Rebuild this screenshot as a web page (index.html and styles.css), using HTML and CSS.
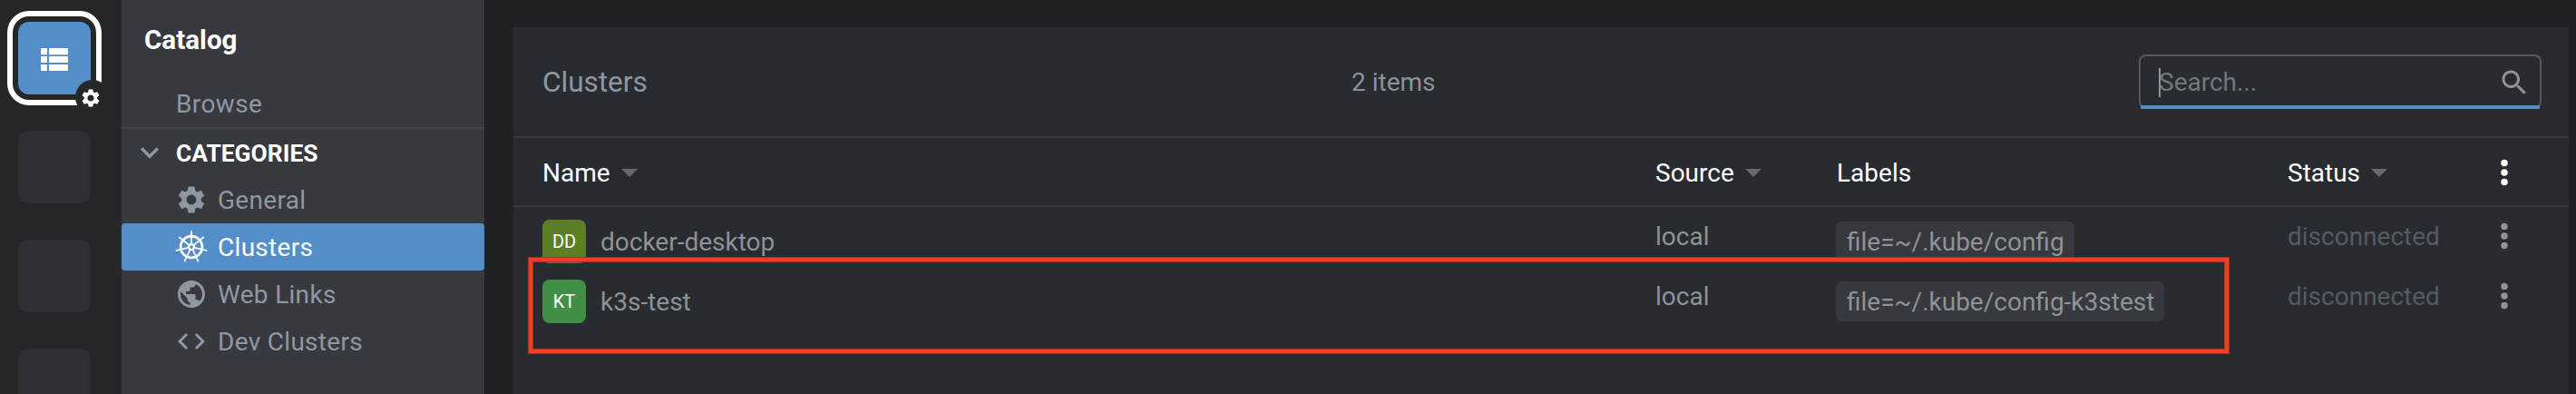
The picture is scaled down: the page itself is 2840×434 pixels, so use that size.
FILE: index.html
```
<!DOCTYPE html>
<html lang="en">
<head>
<meta charset="utf-8">
<title>Catalog</title>
<link rel="stylesheet" href="styles.css">
</head>
<body>
<svg class="defs" width="0" height="0" aria-hidden="true">
  <symbol id="gear" viewBox="0 0 24 24"><path d="M19.14 12.94c.04-.3.06-.61.06-.94 0-.32-.02-.64-.07-.94l2.03-1.58c.18-.14.23-.41.12-.61l-1.92-3.32c-.12-.22-.37-.29-.59-.22l-2.39.96c-.5-.38-1.03-.7-1.62-.94l-.36-2.54c-.04-.24-.24-.41-.48-.41h-3.84c-.24 0-.43.17-.47.41l-.36 2.54c-.59.24-1.13.57-1.62.94l-2.39-.96c-.22-.08-.47 0-.59.22L2.74 8.87c-.12.21-.08.47.12.61l2.03 1.58c-.05.3-.09.63-.09.94s.02.64.07.94l-2.03 1.58c-.18.14-.23.41-.12.61l1.92 3.32c.12.22.37.29.59.22l2.39-.96c.5.38 1.03.7 1.62.94l.36 2.54c.05.24.24.41.48.41h3.84c.24 0 .44-.17.47-.41l.36-2.54c.59-.24 1.13-.56 1.62-.94l2.39.96c.22.08.47 0 .59-.22l1.92-3.32c.12-.22.07-.47-.12-.61l-2.01-1.58zM12 15.6c-1.98 0-3.6-1.62-3.6-3.6s1.62-3.6 3.6-3.6 3.6 1.62 3.6 3.6-1.62 3.6-3.6 3.6z"/></symbol>
  <symbol id="globe" viewBox="0 0 24 24"><path d="M12 2C6.48 2 2 6.48 2 12s4.480 10 10 10 10-4.480 10-10S17.520 2 12 2zm-1 17.930c-3.950-.49-7-3.850-7-7.930 0-.62.08-1.210.21-1.790L9 15v1c0 1.100.9 2 2 2v1.930zm6.900-2.540c-.26-.81-1-1.390-1.900-1.390h-1v-3c0-.55-.45-1-1-1H8v-2h2c.55 0 1-.45 1-1V7h2c1.100 0 2-.9 2-2v-.41c2.930 1.190 5 4.060 5 7.410 0 2.080-.8 3.970-2.100 5.390z"/></symbol>
  <symbol id="code" viewBox="0 0 24 24"><path d="M9.400 16.600L4.800 12l4.600-4.600L8 6l-6 6 6 6 1.400-1.400zm5.200 0l4.600-4.600-4.600-4.600L16 6l6 6-6 6-1.400-1.400z"/></symbol>
  <symbol id="search" viewBox="0 0 24 24"><path d="M15.500 14h-.79l-.28-.27C15.410 12.590 16 11.110 16 9.500 16 5.910 13.090 3 9.500 3S3 5.910 3 9.500 5.910 16 9.500 16c1.610 0 3.090-.59 4.230-1.570l.27.28v.79l5 4.990L20.490 19l-4.990-5zm-6 0C7.010 14 5 11.990 5 9.500S7.010 5 9.500 5 14 7.010 14 9.500 11.990 14 9.500 14z"/></symbol>
  <symbol id="chevron" viewBox="0 0 24 24"><path d="M7.410 8.590L12 13.170l4.590-4.580L18 10l-6 6-6-6 1.410-1.410z"/></symbol>
  <symbol id="caret" viewBox="0 0 18 9"><path d="M0 0h18l-9 9z"/></symbol>
  <symbol id="dots" viewBox="0 0 8 30"><circle cx="4" cy="4.500" r="3.750"/><circle cx="4" cy="15" r="3.750"/><circle cx="4" cy="25.500" r="3.750"/></symbol>
  <symbol id="list" viewBox="0 0 30 25"><path d="M0 0h7v7.200H0zM9 0h21v7.200H9zM0 9h7v7H0zM9 9h21v7H9zM0 18h7v7H0zM9 18h21v7H9z"/></symbol>
  <symbol id="helm" viewBox="-18 -18 36 36">
    <circle r="11.900" fill="none" stroke="currentColor" stroke-width="2.700"/>
    <g stroke="currentColor" stroke-width="1.800" stroke-linecap="round">
      <path d="M0-3.500V-17"/>
      <path d="M0-3.500V-17" transform="rotate(51.430)"/>
      <path d="M0-3.500V-17" transform="rotate(102.860)"/>
      <path d="M0-3.500V-17" transform="rotate(154.290)"/>
      <path d="M0-3.500V-17" transform="rotate(205.710)"/>
      <path d="M0-3.500V-17" transform="rotate(257.140)"/>
      <path d="M0-3.500V-17" transform="rotate(308.570)"/>
    </g>
    <circle r="2.900" fill="none" stroke="currentColor" stroke-width="2.200"/>
  </symbol>
</svg>
<div class="app">
  <nav class="hotbar">
    <div class="cell active">
      <svg class="list-icon"><use href="#list"/></svg>
      <span class="badge"><svg class="badge-icon"><use href="#gear"/></svg></span>
    </div>
    <div class="cell"></div>
    <div class="cell"></div>
    <div class="cell"></div>
  </nav>
  <aside class="sidebar">
    <h1 class="sidebar-title">Catalog</h1>
    <div class="browse">Browse</div>
    <div class="group"><svg class="chevron"><use href="#chevron"/></svg><span>CATEGORIES</span></div>
    <div class="item"><svg class="item-icon"><use href="#gear"/></svg><span>General</span></div>
    <div class="item selected"><svg class="item-icon"><use href="#helm"/></svg><span>Clusters</span></div>
    <div class="item"><svg class="item-icon"><use href="#globe"/></svg><span>Web Links</span></div>
    <div class="item"><svg class="item-icon"><use href="#code"/></svg><span>Dev Clusters</span></div>
  </aside>
  <main class="main">
    <section class="panel">
      <header class="panel-header">
        <h2 class="panel-title">Clusters</h2>
        <span class="count">2 items</span>
        <div class="search"><span class="placeholder">Search...</span><svg class="search-icon"><use href="#search"/></svg></div>
      </header>
      <div class="row head">
        <div class="col">Name<svg class="caret"><use href="#caret"/></svg></div>
        <div class="col source">Source<svg class="caret"><use href="#caret"/></svg></div>
        <div class="col source">Labels</div>
        <div class="col">Status<svg class="caret"><use href="#caret"/></svg></div>
        <div class="col menu"><svg class="dots"><use href="#dots"/></svg></div>
      </div>
      <div class="row">
        <div class="col name"><span class="avatar olive">DD</span>docker-desktop</div>
        <div class="col source">local</div>
        <div class="col labels"><span class="label">file=~/.kube/config</span></div>
        <div class="col status">disconnected</div>
        <div class="col menu"><svg class="dots"><use href="#dots"/></svg></div>
      </div>
      <div class="row">
        <div class="col name"><span class="avatar green">KT</span>k3s-test</div>
        <div class="col source">local</div>
        <div class="col labels"><span class="label">file=~/.kube/config-k3stest</span></div>
        <div class="col status">disconnected</div>
        <div class="col menu"><svg class="dots"><use href="#dots"/></svg></div>
      </div>
      <div class="marker"></div>
    </section>
  </main>
</div>
</body>
</html>
```
FILE: styles.css
```
* { box-sizing: border-box; }
body {
  margin: 0;
  background: #202124;
  font: 28px/52px Roboto, sans-serif;
  color: #8f9296;
  overflow: hidden;
}
svg { fill: currentColor; flex: none; display: block; }
.defs { position: absolute; }
.app { display: flex; height: 434px; overflow: hidden; }

.hotbar {
  width: 134px;
  flex: none;
  padding: 24px 0 0 20px;
  background: #262729;
  display: flex;
  flex-direction: column;
  gap: 40px;
}
.cell {
  position: relative;
  flex: none;
  width: 80px;
  height: 80px;
  border-radius: 12px;
  background: #2f3035;
}
.cell.active {
  display: flex;
  align-items: center;
  justify-content: center;
  background: #538ec9;
  color: #fff;
  box-shadow: 0 0 0 6px #262729, 0 0 0 12px #fff;
}
.list-icon { width: 30px; height: 25px; margin-top: 2px; }
.badge {
  position: absolute;
  left: 63px;
  top: 64px;
  width: 38px;
  height: 38px;
  border-radius: 50%;
  background: #262729;
}
.badge-icon { width: 24px; height: 24px; margin: 8px 0 0 5px; }

.sidebar {
  width: 400px;
  flex: none;
  background: #38393f;
  color: #8e98a3;
}
.sidebar-title {
  margin: 0;
  padding-left: 25px;
  height: 88px;
  font-size: 29.600px;
  font-weight: 700;
  line-height: 88px;
  color: #fff;
}
.browse {
  height: 54px;
  padding-left: 60px;
  border-bottom: 2px solid #424348;
  line-height: 54px;
  letter-spacing: .4px;
}
.group {
  display: flex;
  align-items: center;
  height: 52px;
  padding-left: 11px;
  font-size: 26.400px;
  font-weight: 700;
  color: #fff;
}
.group span { padding-top: 2px; }
.chevron { width: 40px; height: 40px; margin-right: 9px; color: #8e98a3; }
.item {
  display: flex;
  align-items: center;
  height: 52px;
  padding-left: 59px;
  gap: 11px;
  letter-spacing: .3px;
}
.item span { padding-top: 2px; }
.item.selected { background: #538ec9; color: #fff; border-radius: 4px; }
.item-icon { width: 36px; height: 36px; }

.main { flex: 1; padding: 30px 8px 0 32px; }
.panel { position: relative; height: 404px; background: #282b2f; }
.panel-header {
  display: flex;
  align-items: center;
  height: 122px;
  padding: 0 30px 0 32px;
  border-bottom: 2px solid #37393e;
}
.panel-title {
  margin: 0;
  padding-top: 2px;
  width: 892px;
  font-size: 31.500px;
  font-weight: 400;
  color: #8e98a3;
}
.count { padding-top: 1px; }
.search {
  position: relative;
  display: flex;
  align-items: center;
  justify-content: space-between;
  width: 444px;
  height: 60px;
  margin-left: auto;
  padding: 0 10px 0 20px;
  border: 2px solid #55585f;
  border-bottom: 0;
  border-radius: 8px;
}
.search::after {
  content: "";
  position: absolute;
  left: 0;
  right: 0;
  bottom: 0;
  height: 4px;
  background: #538ec9;
}
.placeholder { position: relative; color: #73767a; }
.placeholder::before {
  content: "";
  position: absolute;
  left: 0;
  top: 10px;
  width: 2px;
  height: 32px;
  background: #8f9296;
}
.search-icon { width: 36px; height: 36px; }

.row {
  display: grid;
  grid-template-columns: 1226px 200px 498px 235px 8px;
  height: 66px;
  padding-left: 32px;
}
.col { display: flex; align-items: center; height: 64px; padding-top: 2px; }
.source { padding-left: 1px; }
.row.head { height: 76px; border-bottom: 2px solid #35383c; color: #fff; }
.head .col { height: 76px; }
.caret { width: 18px; height: 9px; margin: 0 0 2px 12px; color: #666a6c; }
.menu { padding-top: 0; }
.dots { width: 8px; height: 30px; }
.row .name, .row .labels { height: 76px; }
.avatar {
  width: 48px;
  height: 48px;
  margin: 0 16px 2px 0;
  border-radius: 8px;
  color: #fff;
  font-size: 20px;
  line-height: 48px;
  text-align: center;
}
.olive { background: #5c7f26; }
.green { background: #418f44; }
.label {
  height: 44px;
  margin-bottom: 2px;
  padding: 0 11px 0 12px;
  border-radius: 6px;
  line-height: 46px;
  background: #37393e;
}
.status { color: #575a61; }

/* Highlight frame drawn over the second row */
.marker {
  position: absolute;
  left: 17px;
  top: 254px;
  width: 1874px;
  height: 105px;
  border: 4px solid #ec4024;
  box-shadow: 0 0 0 1px #a63424, inset 0 0 0 1px #a63424;
}
```
